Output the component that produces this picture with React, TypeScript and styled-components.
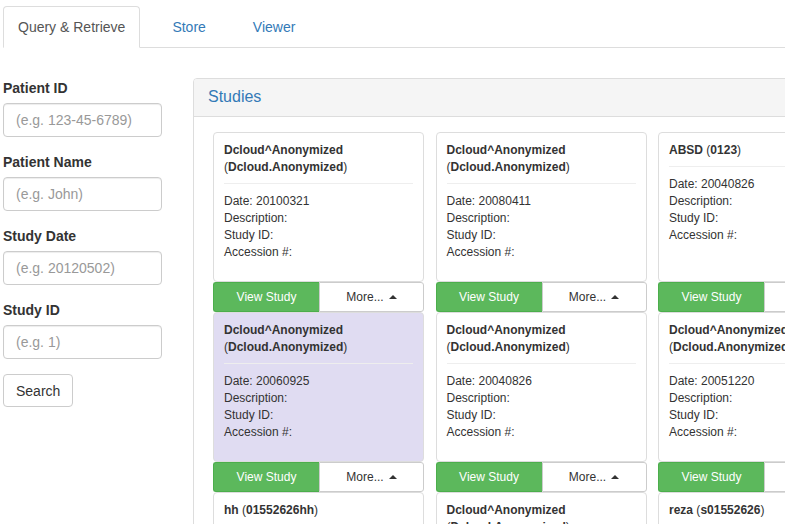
import React from 'react';
import styled, { createGlobalStyle } from 'styled-components';

const GlobalStyle = createGlobalStyle`
  html, body {
    margin: 0;
    padding: 0;
    background: #fff;
    overflow: hidden;
  }
  body {
    font-family: "Liberation Sans", Arial, Helvetica, sans-serif;
    font-size: 14px;
    line-height: 1.42857;
    color: #333;
  }
  * { box-sizing: border-box; }
`;

const Page = styled.div`
  width: 1100px;
  padding: 6px 3px 0;
`;

const Tabs = styled.ul`
  display: flex;
  list-style: none;
  margin: 0;
  padding: 0;
  border-bottom: 1px solid #ddd;
`;

const Tab = styled.li<{ $active?: boolean }>`
  margin-right: 17px;
  margin-bottom: -1px;
  padding: 10px 14px;
  line-height: 20px;
  border: 1px solid ${(p) => (p.$active ? '#ddd' : 'transparent')};
  border-bottom-color: ${(p) => (p.$active ? '#fff' : 'transparent')};
  border-radius: 4px 4px 0 0;
  background: ${(p) => (p.$active ? '#fff' : 'transparent')};
  color: ${(p) => (p.$active ? '#555' : '#337ab7')};
  cursor: pointer;
`;

const Content = styled.div`
  display: grid;
  grid-template-columns: 159px 1fr;
  column-gap: 31px;
  margin-top: 30px;
`;

const SearchForm = styled.form`
  display: flex;
  flex-direction: column;
  align-items: flex-start;
`;

const FormGroup = styled.div`
  display: flex;
  flex-direction: column;
  width: 100%;
  margin-bottom: 15px;
`;

const Label = styled.label`
  font-weight: bold;
  line-height: 20px;
  margin-bottom: 5px;
`;

const Input = styled.input`
  width: 100%;
  height: 34px;
  padding: 6px 12px;
  font-family: inherit;
  font-size: 14px;
  color: #555;
  border: 1px solid #ccc;
  border-radius: 4px;
  box-shadow: inset 0 1px 1px rgba(0, 0, 0, 0.075);
  &::placeholder { color: #999; }
`;

const Button = styled.button`
  height: 33px;
  padding: 6px 12px;
  font-family: inherit;
  font-size: 14px;
  color: #333;
  background: #fff;
  border: 1px solid #ccc;
  border-radius: 4px;
`;

const Panel = styled.section`
  width: 880px;
  border: 1px solid #ddd;
  border-radius: 4px;
`;

const PanelHeading = styled.div`
  padding: 9px 14px 11px;
  background: #f5f5f5;
  border-bottom: 1px solid #ddd;
  border-radius: 3px 3px 0 0;
`;

const PanelTitle = styled.h3`
  margin: 0;
  font-size: 16px;
  font-weight: normal;
  line-height: 17px;
  color: #337ab7;
`;

const PanelBody = styled.div`
  padding: 15px 15px 15px 19px;
`;

const CardGrid = styled.div`
  display: grid;
  grid-template-columns: repeat(4, 211px);
  column-gap: 11.5px;
`;

const Card = styled.div`
  display: flex;
  flex-direction: column;
  font-size: 12px;
  line-height: 17px;
`;

const CardBody = styled.div<{ $selected?: boolean }>`
  height: 150px;
  padding: 9px 10px;
  border: 1px solid #ddd;
  border-radius: 4px;
  background: ${(p) => (p.$selected ? '#e0dcf2' : '#fff')};
`;

const Title = styled.div`
  padding-bottom: 7px;
  border-bottom: 1px solid #eee;
  margin-bottom: 9px;
`;

const Field = styled.div``;

const ButtonRow = styled.div`
  display: grid;
  grid-template-columns: 106px 105px;
  height: 30px;
`;

const ActionButton = styled.button<{ $primary?: boolean }>`
  display: flex;
  align-items: center;
  justify-content: center;
  gap: 5px;
  font-family: inherit;
  font-size: 12px;
  padding: 0;
  color: ${(p) => (p.$primary ? '#fff' : '#333')};
  background: ${(p) => (p.$primary ? '#5cb85c' : '#fff')};
  border: 1px solid ${(p) => (p.$primary ? '#4cae4c' : '#ccc')};
  border-radius: ${(p) => (p.$primary ? '3px 0 0 3px' : '0 3px 3px 0')};
  ${(p) => (p.$primary ? 'border-right: none;' : '')}
`;

const Caret = styled.span`
  width: 0;
  height: 0;
  border-left: 4px solid transparent;
  border-right: 4px solid transparent;
  border-bottom: 4px solid #333;
  margin-top: -1px;
`;

type Study = {
  name: string;
  id: string;
  date: string;
  selected?: boolean;
};

const studies: Study[] = [
  { name: 'Dcloud^Anonymized', id: 'Dcloud.Anonymized', date: '20100321' },
  { name: 'Dcloud^Anonymized', id: 'Dcloud.Anonymized', date: '20080411' },
  { name: 'ABSD', id: '0123', date: '20040826' },
  { name: 'Dcloud^Anonymized', id: 'Dcloud.Anonymized', date: '20080411' },
  { name: 'Dcloud^Anonymized', id: 'Dcloud.Anonymized', date: '20060925', selected: true },
  { name: 'Dcloud^Anonymized', id: 'Dcloud.Anonymized', date: '20040826' },
  { name: 'Dcloud^Anonymized', id: 'Dcloud.Anonymized', date: '20051220' },
  { name: 'Dcloud^Anonymized', id: 'Dcloud.Anonymized', date: '20051220' },
  { name: 'hh', id: '01552626hh', date: '20100321' },
  { name: 'Dcloud^Anonymized', id: 'Dcloud.Anonymized', date: '20100321' },
  { name: 'reza', id: 's01552626', date: '20100321' },
  { name: 'reza', id: 's01552626', date: '20100321' },
];

const fields = [
  { label: 'Patient ID', placeholder: '(e.g. 123-45-6789)' },
  { label: 'Patient Name', placeholder: '(e.g. John)' },
  { label: 'Study Date', placeholder: '(e.g. 20120502)' },
  { label: 'Study ID', placeholder: '(e.g. 1)' },
];

const StudyCard: React.FC<{ study: Study }> = ({ study }) => (
  <Card>
    <CardBody $selected={study.selected}>
      <Title>
        <b>{study.name}</b> (<b>{study.id}</b>)
      </Title>
      <Field>Date: {study.date}</Field>
      <Field>Description:</Field>
      <Field>Study ID:</Field>
      <Field>Accession #:</Field>
    </CardBody>
    <ButtonRow>
      <ActionButton $primary>View Study</ActionButton>
      <ActionButton>
        More... <Caret />
      </ActionButton>
    </ButtonRow>
  </Card>
);

const App: React.FC = () => (
  <>
    <GlobalStyle />
    <Page>
      <Tabs>
        <Tab $active>Query &amp; Retrieve</Tab>
        <Tab>Store</Tab>
        <Tab>Viewer</Tab>
      </Tabs>
      <Content>
        <SearchForm onSubmit={(e) => e.preventDefault()}>
          {fields.map((f) => (
            <FormGroup key={f.label}>
              <Label>{f.label}</Label>
              <Input placeholder={f.placeholder} />
            </FormGroup>
          ))}
          <Button type="submit">Search</Button>
        </SearchForm>
        <Panel>
          <PanelHeading>
            <PanelTitle>Studies</PanelTitle>
          </PanelHeading>
          <PanelBody>
            <CardGrid>
              {studies.map((s, i) => (
                <StudyCard key={i} study={s} />
              ))}
            </CardGrid>
          </PanelBody>
        </Panel>
      </Content>
    </Page>
  </>
);

export default App;
